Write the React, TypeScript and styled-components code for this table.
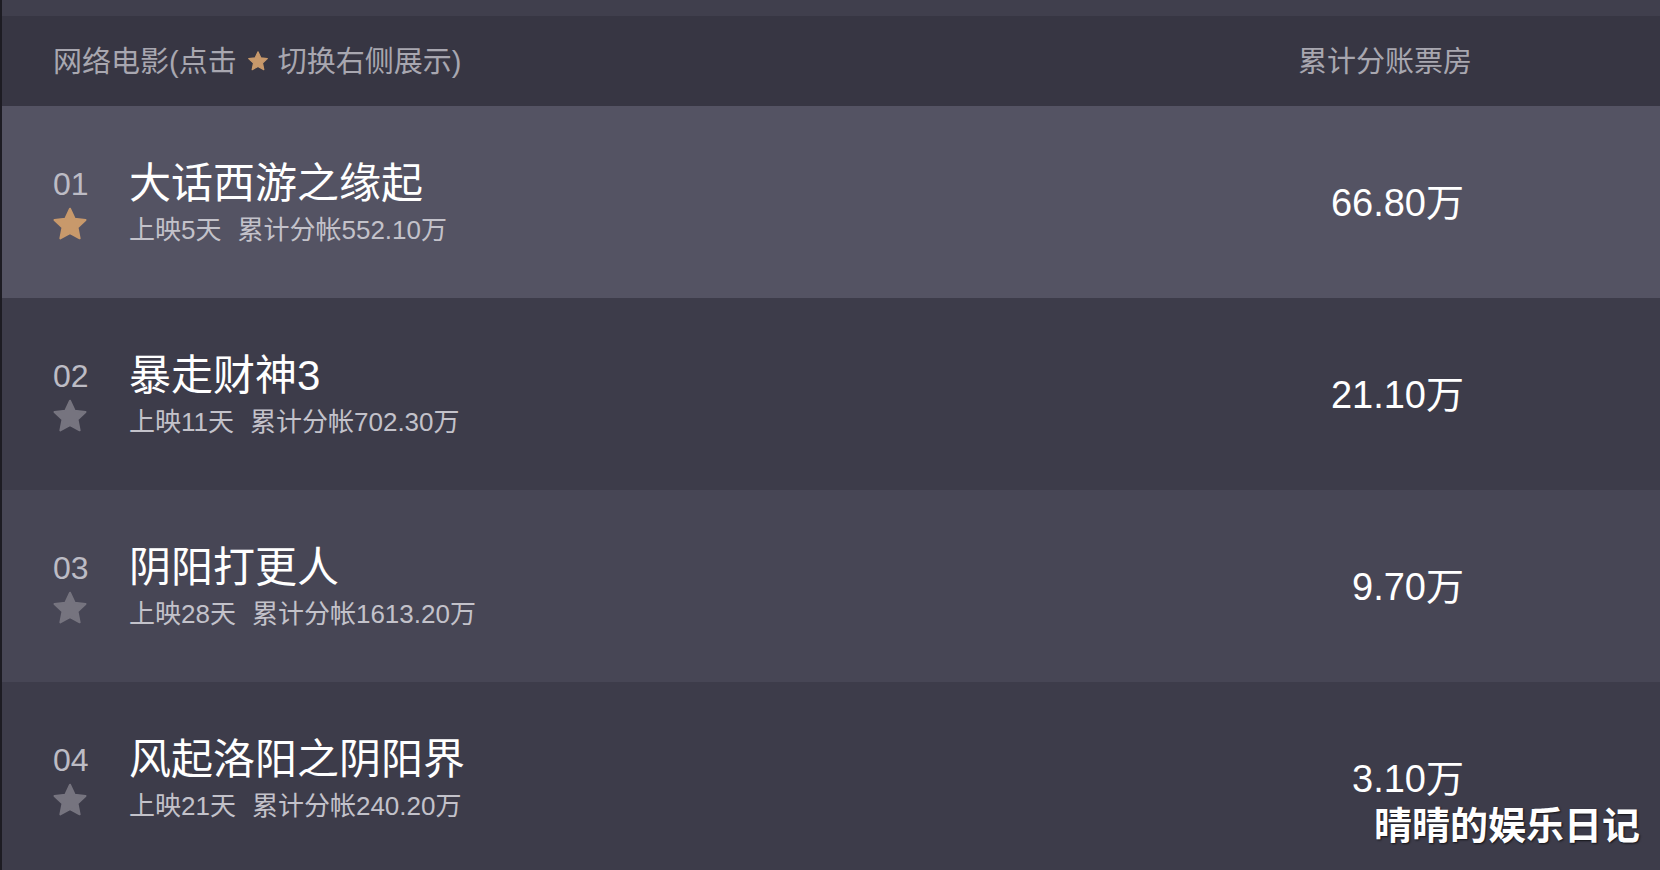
import React from 'react'
import styled, { createGlobalStyle } from 'styled-components'

const GlobalStyle = createGlobalStyle`
  html, body {
    margin: 0;
    padding: 0;
    background: #3d3c4a;
  }
  * {
    box-sizing: border-box;
  }
`

const FONT = `'Liberation Sans', Arial, 'Noto Sans CJK SC', sans-serif`

const movies = [
  { rank: '01', title: '大话西游之缘起', days: '上映5天', total: '累计分帐552.10万', box: '66.80万', starred: true },
  { rank: '02', title: '暴走财神3', days: '上映11天', total: '累计分帐702.30万', box: '21.10万', starred: false },
  { rank: '03', title: '阴阳打更人', days: '上映28天', total: '累计分帐1613.20万', box: '9.70万', starred: false },
  { rank: '04', title: '风起洛阳之阴阳界', days: '上映21天', total: '累计分帐240.20万', box: '3.10万', starred: false },
]

const rowBg = ['#545363', '#3d3c4a', '#474655', '#3d3c4a']

// star icon
const Star = ({ size, color }: { size: number; color: string }) => (
  <svg width={size} height={size} viewBox="0 0 24 24">
    <path
      d="M12 2.8l2.8 6 6.5.8-4.8 4.5 1.3 6.5L12 17.4l-5.8 3.2 1.3-6.5-4.8-4.5 6.5-.8z"
      fill={color}
      stroke={color}
      strokeWidth="1.2"
      strokeLinejoin="round"
    />
  </svg>
)

const App = () => {
  return (
    <>
      <GlobalStyle />
      <Page>
        <TopStrip />
        <Header>
          <HeaderLabel>
            网络电影(点击
            <HeaderStar>
              <Star size={24} color="#c8996b" />
            </HeaderStar>
            切换右侧展示)
          </HeaderLabel>
          <HeaderLabel>累计分账票房</HeaderLabel>
        </Header>
        <List>
          {movies.map((m, i) => (
            <Row key={m.rank} bg={rowBg[i]}>
              <Info>
                <RankCol>
                  <Rank>{m.rank}</Rank>
                  <StarBox>
                    <Star size={40} color={m.starred ? '#c8996b' : '#76747f'} />
                  </StarBox>
                </RankCol>
                <TextCol>
                  <Title>{m.title}</Title>
                  <Sub>
                    <Days>{m.days}</Days>
                    <span>{m.total}</span>
                  </Sub>
                </TextCol>
              </Info>
              <BoxOffice>{m.box}</BoxOffice>
            </Row>
          ))}
        </List>
        <Watermark>晴晴的娱乐日记</Watermark>
      </Page>
    </>
  )
}

const Page = styled.div`
  position: relative;
  width: 1660px;
  height: 870px;
  overflow: hidden;
  border-left: 2px solid #1d1c23;
  background: #3d3c4a;
  font-family: ${FONT};
`

const TopStrip = styled.div`
  height: 16px;
  background: #403f4d;
`

// header
const Header = styled.div`
  height: 90px;
  display: flex;
  align-items: center;
  justify-content: space-between;
  padding: 0 188px 4px 51px;
  background: #373643;
`

const HeaderLabel = styled.div`
  display: flex;
  align-items: center;
  font-size: 29px;
  color: #a8a7b0;
`

const HeaderStar = styled.span`
  display: inline-flex;
  margin: 4px 8px 0 9px;
`

// rows
const List = styled.div`
  display: flex;
  flex-direction: column;
`

const Row = styled.div<{ bg: string }>`
  height: 192px;
  flex-shrink: 0;
  display: flex;
  align-items: center;
  justify-content: space-between;
  padding: 0 196px 0 51px;
  background: ${({ bg }) => bg};
`

const Info = styled.div`
  display: flex;
  align-items: flex-start;
  margin-top: 10px;
`

const RankCol = styled.div`
  width: 76px;
  display: flex;
  flex-direction: column;
`

const Rank = styled.div`
  height: 46px;
  line-height: 46px;
  font-size: 32px;
  color: #bdbcc5;
`

const StarBox = styled.div`
  height: 46px;
  display: flex;
  align-items: center;
  margin-left: -3px;
  margin-top: -6px;
`

const TextCol = styled.div`
  display: flex;
  flex-direction: column;
`

const Title = styled.div`
  height: 46px;
  line-height: 46px;
  font-size: 42px;
  color: #ffffff;
`

const Sub = styled.div`
  height: 46px;
  line-height: 46px;
  font-size: 26px;
  color: #c3c2ca;
`

const Days = styled.span`
  margin-right: 16px;
`

const BoxOffice = styled.div`
  font-size: 38px;
  color: #ffffff;
  margin-bottom: 6px;
`

const Watermark = styled.div`
  position: absolute;
  right: 20px;
  bottom: 20px;
  font-size: 38px;
  font-weight: bold;
  color: #ffffff;
  text-shadow: 1px 1px 2px rgba(0, 0, 0, 0.7);
`

export default App
